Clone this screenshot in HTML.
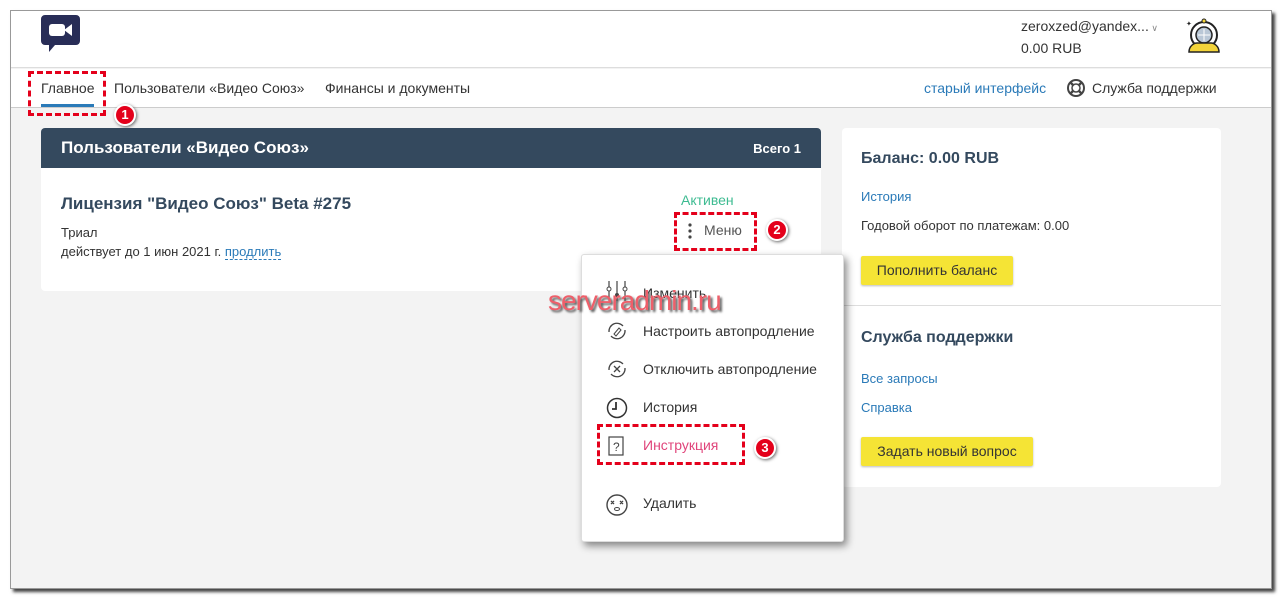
<!DOCTYPE html>
<html><head><meta charset="utf-8"><style>
*{margin:0;padding:0;box-sizing:border-box}
body{width:1283px;height:601px;background:#fff;font-family:"Liberation Sans","DejaVu Sans",sans-serif;position:relative;overflow:hidden;color:#333}
.a{position:absolute}
.frame{left:10px;top:10px;width:1262px;height:579px;background:#f3f3f3;border:1px solid #999;box-shadow:3px 3px 3px #444}
.t{position:absolute;white-space:nowrap}
.link{color:#2a7ab8}
.dash{position:absolute;border:3px dashed #e4001b}
.badge{position:absolute;width:22px;height:22px;border-radius:50%;background:#e4001b;border:2px solid #fff;box-shadow:1px 1px 3px #666;color:#fff;font-weight:bold;font-size:13px;text-align:center;line-height:18px}
.btn{position:absolute;background:#f5e435;border-radius:2px;box-shadow:0 1px 2px #bbb;font-size:14px;color:#333;text-align:center}
.mi{position:absolute;left:61px;font-size:14px;color:#333;white-space:nowrap}
</style></head><body>
<div class="a frame"></div>
<div class="a" style="left:11px;top:11px;width:1260px;height:57px;background:#fff;border-bottom:1px solid #ddd"></div>
<div class="a" style="left:11px;top:69px;width:1260px;height:39px;background:#fff;border-bottom:1px solid #ccc"></div>
<svg class="a" style="left:41px;top:15px" width="39" height="38" viewBox="0 0 39 38"><path d="M4 0h31a4 4 0 0 1 4 4v22a4 4 0 0 1-4 4H14l-6 7v-7H4a4 4 0 0 1-4-4V4a4 4 0 0 1 4-4z" fill="#282d57"/><rect x="8" y="9" width="16" height="12" rx="3" fill="#fff"/><path d="M23 15l8-6v12z" fill="#fff"/></svg>
<div class="t" style="left:1021px;top:18px;font-size:14px;color:#333">zeroxzed@yandex...<span style="font-size:9px;color:#888"> ∨</span></div>
<div class="t" style="left:1021px;top:40px;font-size:14px;color:#333">0.00 RUB</div>
<svg class="a" style="left:1185px;top:18px" width="38" height="36" viewBox="0 0 38 36"><circle cx="19" cy="17" r="13" fill="#fff" stroke="#222" stroke-width="2"/><circle cx="19" cy="17" r="8" fill="#b9c7d6" stroke="#222" stroke-width="1.5"/><path d="M13 17h12M19 11v12" stroke="#fff"/><path d="M4 34c0-6 5-9 8-9h14c3 0 8 3 8 9z" fill="#f3d43a" stroke="#222" stroke-width="1.5"/><circle cx="19" cy="3" r="2" fill="#f3d43a" stroke="#222"/><text x="1" y="8" font-size="7" fill="#222">✦</text></svg>
<div class="t" style="left:41px;top:80px;font-size:14px;color:#333">Главное</div>
<div class="a" style="left:41px;top:104px;width:53px;height:3px;background:#2a7ab8"></div>
<div class="t" style="left:114px;top:80px;font-size:14px;color:#333">Пользователи «Видео Союз»</div>
<div class="t" style="left:325px;top:80px;font-size:14px;color:#333">Финансы и документы</div>
<div class="t link" style="left:924px;top:80px;font-size:14px">старый интерфейс</div>
<svg class="a" style="left:1066px;top:78px" width="20" height="20" viewBox="0 0 20 20"><circle cx="10" cy="10" r="8" fill="none" stroke="#444" stroke-width="2"/><circle cx="10" cy="10" r="4" fill="none" stroke="#444" stroke-width="1.5"/><path d="M4 4l3 3M16 4l-3 3M4 16l3-3M16 16l-3-3" stroke="#444" stroke-width="2.5"/></svg>
<div class="t" style="left:1092px;top:80px;font-size:14px;color:#333">Служба поддержки</div>
<div class="dash" style="left:28px;top:71px;width:78px;height:45px"></div>
<div class="badge" style="left:114px;top:104px">1</div>

<div class="a" style="left:41px;top:128px;width:780px;height:163px;background:#fff;border-radius:4px;overflow:hidden">
<div style="height:40px;background:#34495e;position:relative"><div class="t" style="left:20px;top:10px;color:#fff;font-weight:bold;font-size:17px">Пользователи «Видео Союз»</div><div class="t" style="right:20px;top:13px;color:#fff;font-weight:bold;font-size:13px">Всего 1</div></div>
<div class="t" style="left:20px;top:66px;font-weight:bold;font-size:17px;color:#34495e">Лицензия "Видео Союз" Beta #275</div>
<div class="t" style="left:20px;top:97px;font-size:13px">Триал</div>
<div class="t" style="left:20px;top:116px;font-size:13px">действует до 1 июн 2021 г. <span class="link" style="border-bottom:1px dashed #2a7ab8">продлить</span></div>
<div class="t" style="left:640px;top:64px;font-size:14px;color:#3dbb91">Активен</div>
<svg class="a" style="left:646px;top:94px" width="6" height="18" viewBox="0 0 6 18"><circle cx="3" cy="3" r="1.6" fill="#444"/><circle cx="3" cy="9" r="1.6" fill="#444"/><circle cx="3" cy="15" r="1.6" fill="#444"/></svg>
<div class="t" style="left:663px;top:94px;font-size:14px;color:#555">Меню</div>
</div>
<div class="dash" style="left:674px;top:212px;width:83px;height:39px"></div>
<div class="badge" style="left:766px;top:219px">2</div>

<div class="a" style="left:842px;top:128px;width:379px;height:359px;background:#fff;border-radius:4px">
<div class="t" style="left:19px;top:22px;font-weight:bold;font-size:16px;color:#34495e">Баланс: 0.00 RUB</div>
<div class="t link" style="left:19px;top:61px;font-size:13px">История</div>
<div class="t" style="left:19px;top:90px;font-size:13px">Годовой оборот по платежам: 0.00</div>
<div class="btn" style="left:19px;top:128px;width:152px;height:29px;line-height:29px">Пополнить баланс</div>
<div class="a" style="left:0;top:177px;width:379px;height:1px;background:#ddd"></div>
<div class="t" style="left:19px;top:201px;font-weight:bold;font-size:16px;color:#34495e">Служба поддержки</div>
<div class="t link" style="left:19px;top:243px;font-size:13px">Все запросы</div>
<div class="t link" style="left:19px;top:272px;font-size:13px">Справка</div>
<div class="btn" style="left:19px;top:309px;width:172px;height:29px;line-height:29px">Задать новый вопрос</div>
</div>

<div class="a" style="left:581px;top:254px;width:263px;height:288px;background:#fff;border-radius:3px;border:1px solid #ddd;box-shadow:3px 4px 8px rgba(0,0,0,.45)">
<svg class="a" style="left:23px;top:26px" width="26" height="20" viewBox="0 0 26 20"><path d="M4 0v20M12 0v20M20 0v20" stroke="#444" stroke-width="1.2"/><circle cx="4" cy="8" r="2" fill="#fff" stroke="#444"/><circle cx="12" cy="14" r="2" fill="#444"/><circle cx="20" cy="8" r="2" fill="#fff" stroke="#444"/></svg>
<div class="mi" style="top:30px">Изменить</div>
<svg class="a" style="left:24px;top:66px" width="22" height="20" viewBox="0 0 22 20"><path d="M3 11a8 8 0 0 1 14-6M19 9a8 8 0 0 1-14 6" fill="none" stroke="#444" stroke-width="1.3"/><path d="M8 13l5-6 2 2-5 6z" fill="none" stroke="#444"/></svg>
<div class="mi" style="top:68px">Настроить автопродление</div>
<svg class="a" style="left:24px;top:104px" width="22" height="20" viewBox="0 0 22 20"><path d="M3 11a8 8 0 0 1 14-6M19 9a8 8 0 0 1-14 6" fill="none" stroke="#444" stroke-width="1.3"/><path d="M8 7l6 6M14 7l-6 6" stroke="#444" stroke-width="1.3"/></svg>
<div class="mi" style="top:106px">Отключить автопродление</div>
<svg class="a" style="left:24px;top:142px" width="22" height="22" viewBox="0 0 22 22"><circle cx="11" cy="11" r="9.5" fill="none" stroke="#333" stroke-width="1.5"/><path d="M10 5v7H6" fill="none" stroke="#333" stroke-width="1.8"/></svg>
<div class="mi" style="top:144px">История</div>
<svg class="a" style="left:24px;top:180px" width="20" height="22" viewBox="0 0 20 22"><rect x="3" y="2" width="14" height="18" fill="none" stroke="#444" stroke-width="1.2"/><text x="7" y="16" font-size="12" fill="#444" font-family="Liberation Sans">?</text></svg>
<div class="mi" style="top:182px;color:#e0457b">Инструкция</div>
<svg class="a" style="left:23px;top:238px" width="24" height="24" viewBox="0 0 24 24"><circle cx="12" cy="12" r="10" fill="none" stroke="#444" stroke-width="1.4"/><path d="M6 8l3 3M9 8l-3 3M15 8l3 3M18 8l-3 3" stroke="#444" stroke-width="1.3"/><ellipse cx="12" cy="16" rx="2.5" ry="1.5" fill="none" stroke="#444"/></svg>
<div class="mi" style="top:240px">Удалить</div>
</div>
<div class="dash" style="left:597px;top:424px;width:148px;height:41px"></div>
<div class="badge" style="left:754px;top:437px">3</div>
<div class="t" style="left:548px;top:285px;font-size:28px;color:#ee5f6a;text-shadow:2px 2px 2px #555;letter-spacing:-1px">serveradmin.ru</div>
</body></html>
